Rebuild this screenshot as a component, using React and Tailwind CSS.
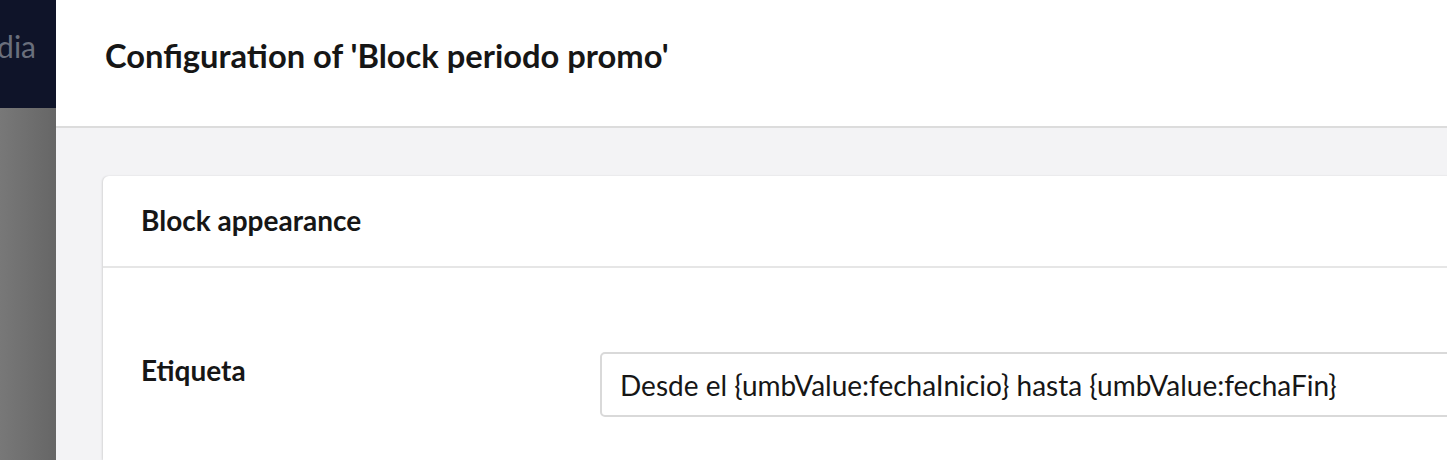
import React from 'react';

export default function App() {
  return (
    <div className="flex w-[1447px] h-[460px] overflow-hidden font-['Lato','Open_Sans',sans-serif] text-[#161616]">
      <aside className="w-[56px] shrink-0 flex flex-col">
        <div className="h-[108px] bg-[#0f1429] flex justify-end overflow-hidden pr-[20px] pt-[26px]">
          <span className="whitespace-nowrap text-[30px] leading-[40px] text-[#6a6f7c]">Media</span>
        </div>
        <div className="flex-1 bg-gradient-to-r from-[#787878] to-[#666666]" />
      </aside>

      <main className="flex-1 flex flex-col overflow-hidden">
        <header className="h-[128px] shrink-0 bg-white border-b-2 border-[#dcdcdc] flex items-center pl-[49px] pb-[14px]">
          <h1 className="text-[32.7px] font-bold leading-none whitespace-nowrap">Configuration of 'Block periodo promo'</h1>
        </header>

        <div className="flex-1 bg-[#f3f3f5] pl-[47px] pt-[48px]">
          <section className="w-[1500px] h-full bg-white rounded-tl-[6px] shadow-[-1px_0_2px_rgba(0,0,0,0.12)]">
            <div className="h-[92px] border-b-2 border-[#e6e6e6] flex items-center pl-[38px] pb-[2px]">
              <h2 className="text-[28px] font-bold whitespace-nowrap">Block appearance</h2>
            </div>
            <div className="flex pt-[84px]">
              <div className="w-[497px] pl-[38px] -mt-[3px]">
                <span className="text-[28px] leading-[42px] font-bold">Etiqueta</span>
              </div>
              <div className="h-[65px] w-[900px] border-2 border-[#d9d9d9] rounded-[5px] flex items-center pl-[18px]">
                <span className="text-[28px] whitespace-nowrap">Desde el {'{umbValue:fechaInicio}'} hasta {'{umbValue:fechaFin}'}</span>
              </div>
            </div>
          </section>
        </div>
      </main>
    </div>
  );
}
